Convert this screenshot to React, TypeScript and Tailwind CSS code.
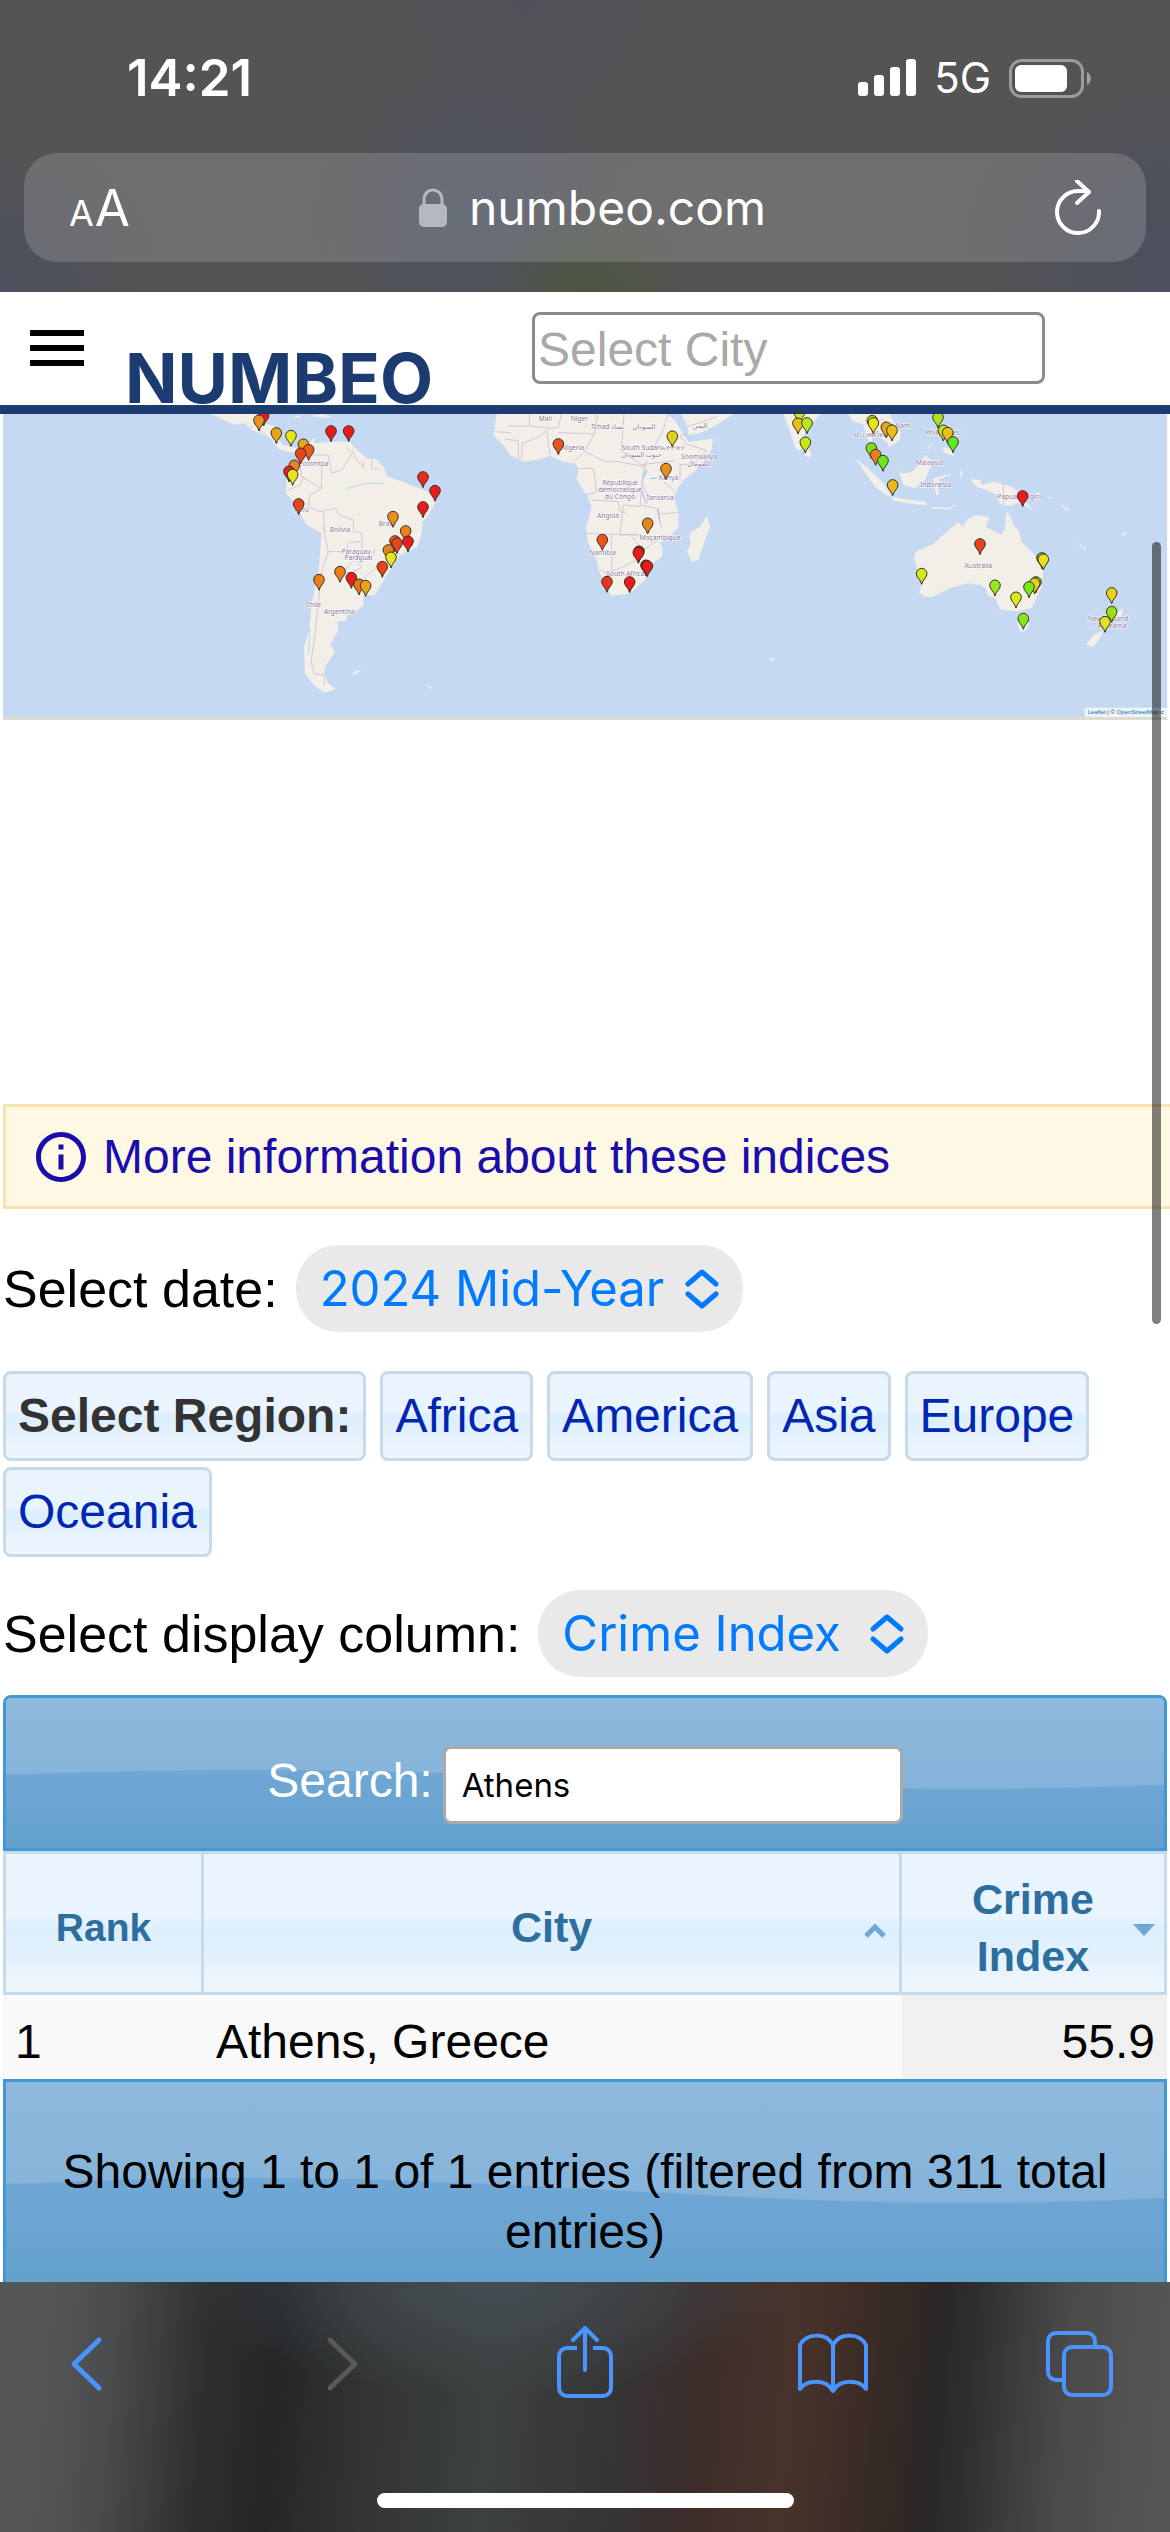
import { useState } from "react";

const regions = ["Africa", "America", "Asia", "Europe", "Oceania"];

type Pin = [x: number, y: number, color: string];

const americaPins: Pin[] = [
  [791, 78, "#e81c1c"],
  [777, 93, "#e8901c"],
  [829, 131, "#e8a51c"],
  [873, 139, "#e8e41c"],
  [993, 125, "#e81c1c"],
  [1046, 125, "#e81c1c"],
  [910, 165, "#e8a51c"],
  [926, 181, "#e8601c"],
  [902, 192, "#e8431c"],
  [883, 228, "#e8801c"],
  [867, 246, "#e81c1c"],
  [878, 256, "#e8e41c"],
  [896, 344, "#e8431c"],
  [1179, 382, "#e8901c"],
  [1185, 455, "#e8601c"],
  [1191, 461, "#e8431c"],
  [1165, 482, "#e8801c"],
  [1173, 504, "#e8e41c"],
  [1147, 532, "#e8431c"],
  [957, 571, "#e8801c"],
  [1020, 547, "#e8801c"],
  [1054, 565, "#e81c1c"],
  [1077, 585, "#e8751c"],
  [1097, 589, "#e8a51c"],
];

const africaPins: Pin[] = [
  [69, 263, "#e82a1c"],
  [105, 304, "#e81c1c"],
  [69, 353, "#e81c1c"],
  [17, 425, "#e8801c"],
  [24, 456, "#e81c1c"],
  [475, 164, "#e8551c"],
  [817, 141, "#e0d01c"],
  [798, 238, "#e8901c"],
  [743, 402, "#e8851c"],
  [607, 451, "#e8551c"],
  [717, 486, "#b81414"],
  [715, 490, "#e81c1c"],
  [738, 528, "#b81414"],
  [742, 530, "#e81c1c"],
  [621, 577, "#e8351c"],
  [689, 578, "#e81c1c"],
  [1198, 70, "#c8e81c"],
  [1194, 102, "#e8c01c"],
];

const oceaniaPins: Pin[] = [
  [21, 101, "#b8e81c"],
  [16, 159, "#c8e81c"],
  [217, 94, "#a0e01c"],
  [220, 101, "#e8e41c"],
  [259, 114, "#e8a51c"],
  [276, 123, "#e8c01c"],
  [214, 176, "#7ae01c"],
  [227, 196, "#e8801c"],
  [249, 214, "#6ae81c"],
  [278, 287, "#e8b81c"],
  [414, 84, "#a8e81c"],
  [430, 123, "#b8e81c"],
  [443, 130, "#e8c01c"],
  [459, 158, "#60e81c"],
  [668, 320, "#e81c1c"],
  [540, 464, "#e8431c"],
  [365, 553, "#d0e81c"],
  [726, 506, "#80c01c"],
  [730, 510, "#e8e01c"],
  [585, 588, "#98e81c"],
  [708, 578, "#8ad01c"],
  [704, 582, "#e8d01c"],
  [687, 593, "#78e81c"],
  [648, 624, "#d8e81c"],
  [670, 688, "#88e81c"],
  [935, 611, "#e8d01c"],
  [935, 667, "#98e01c"],
  [915, 697, "#e0e41c"],
];

function Pins({ pins }: { pins: Pin[] }) {
  return (
    <>
      {pins.map(([x, y, color]) => (
        <path
          key={`${x}-${y}`}
          transform={`translate(${x} ${y})`}
          d="M0 0C-3-15-16-20-16-32a16 16 0 1 1 32 0C16-20 3-15 0 0Z"
          fill={color}
          stroke="#3a3020"
          strokeWidth="3"
        />
      ))}
    </>
  );
}

function WorldMap() {
  return (
    <svg viewBox="9 42 3492 909" className="block h-auto w-full bg-[#c5d9f3]">
      <g fill="#f2efe9" strokeLinejoin="round">
        <path d="M862 155 838 147 822 130 815 118 795 105 750 88 735 70 705 74 665 58 635 42H775L790 70 825 78 835 118 850 135 880 142 900 145 925 130 950 108 940 130 960 128 1000 125 1050 125 1065 145 1100 175 1130 178 1157 210 1158 228 1200 242 1240 258 1290 278 1310 290 1308 305 1285 345 1268 365 1265 400 1252 440 1220 455 1198 468 1170 510 1140 560 1125 585 1090 588 1092 615 1060 640 1040 645 1040 662 1012 665 1015 690 990 735 1005 755 975 800 972 820 985 850 1008 868 975 878 940 855 915 820 912 740 928 690 935 610 955 520 965 400 920 375 885 310 858 280 858 255 865 200 895 190 900 160Z" />
        <path d="M1055 823l14-12 14 2-22 12ZM885 52h18v-5h-18ZM930 48l40-6 25 8-15 4Z" />
        <g transform="translate(1200)">
          <path d="M290 42 283 90 279 105 315 140 330 165 370 185 420 178 450 168 490 185 525 190 535 205 530 240 560 285 575 320 558 385 565 430 590 480 595 505 615 560 635 588 690 580 735 540 745 500 785 470 788 445 780 430 835 385 835 340 822 290 830 270 850 240 900 200 935 150 938 115 895 122 865 125 845 95 825 60 800 42Z" />
          <path d="M845 42 862 80 865 105 900 100 950 75 1000 42Z" />
          <path d="M920 348 930 380 915 420 895 480 875 485 862 455 872 430 868 400 900 380Z" />
          <path d="M1150 42 1165 80 1185 140 1195 152 1205 145 1215 95 1262 42Z" />
          <path d="M1218 145l10 5 7 15-8 8-12-6ZM1112 772l12 4-2 8-10-2ZM80 853l16 10-3 3-12-9Z" />
        </g>
        <g transform="translate(2400)">
          <path d="M145 42 160 65 190 72 200 110 215 140 235 190 250 205 245 170 222 135 215 105 240 110 262 130 268 142 300 120 302 95 280 65 270 42Z" />
          <path d="M165 175 200 200 250 250 275 290 258 285 225 260 190 210Z" />
          <path d="M275 290 320 298 375 305 382 316 320 310 275 300Z" />
          <path d="M298 215 330 218 378 165 398 185 375 240 345 265 310 255Z" />
          <path d="M400 235l52-14-3 6-37 12 25 15-25-5 5 35-8 1-6-25ZM395 320l50 4 28-12-22 16-54-2ZM480 210l8 12-6 14ZM380 145l22-20-18 24ZM430 140l22 6 10 22-14-4-18-8Z" />
          <path d="M510 238 540 240 545 255 580 245 640 262 672 300 700 330 655 308 630 318 600 312 590 285 560 270 530 260Z" />
          <path d="M690 290l30-14-8 18ZM745 288l14 8-8 2ZM775 310l34 20-10 2Z" />
          <path d="M348 455 400 432 430 405 440 395 475 367 490 380 500 360 525 345 568 352 558 380 605 405 615 385 617 350 622 336 632 350 640 375 655 390 665 425 705 465 730 510 725 560 695 625 650 635 600 628 585 595 565 588 558 565 540 555 500 550 450 565 400 590 378 592 358 580 365 550 350 500 343 475Z" />
          <path d="M650 667 688 668 680 690 662 697Z" />
          <path d="M928 620 945 640 970 625 965 645 940 662 925 682ZM912 690 900 715 880 740 858 735 880 705ZM835 430l6 2 20 19-5 1ZM962 405l20-12-6 14Z" />
        </g>
      </g>

      <g fill="none" stroke="#d8c4d6" strokeWidth="3">
        <path d="M760 75 750 88M775 88l22 14M925 165l60 0 10 55 30-10 30-48-15-20M1055 150l15 30 20 20M1090 180v25M1115 178v28l25 0M925 165l-25 25 5 40 60 35 0-65 20-10M965 265l-35 20-5 35 35 15 48-10 10 20 42 15 0 35 25 3 2 75-20 10 18 18-30 20-22-8 25-30M970 335l5 75 10 45 55 0 5-28 35-2M985 455l-20 60-10 90-10 100-12 80 10 35 30 6v30M865 270l35-15 10-25M1130 500l-42 38 12 30" />
        <g transform="translate(1200)">
          <path d="M388 42v36h-65M388 78l60 5M485 42l-10 40-28 4-30 25-50 18-2 52M440 95l10 70M475 98l108 4 10-60M583 102l-28 50-30 32M672 42l-8 110 60 42 100-12M805 42l-20 60-30 50M860 100l-20 8 20 24 60 20-40 40-40 2v50M790 245l35 28M535 205h45l10 70-35 12M555 155l60 30 40 0 80 15-10 60-5 60-50-5-10 90 60 0M575 300l80 5 5 30 20 2M558 400l85 3 70 0M635 405v110l35-15 60-30M690 405l40 45 45-30M720 315l50 10 15 60M780 342l55-5M600 510l35 20" />
          <path d="M862 80l90-30M283 95l50 3M315 118l40 4v60M740 180l-15 65 20 50" />
        </g>
        <g transform="translate(2400)">
          <path d="M610 255v58M305 218l30-4 28-30M195 60l20 30 30-35 30 30M215 105l12 40" />
        </g>
      </g>

      <g fill="none" stroke="#9fcbe6" strokeWidth="4">
        <path d="M965 380l8 10M930 680l-4 80M1040 265l60-15 50 0" strokeWidth="2" />
        <path d="M1926 270l6 25 10 15M1975 325l4 40M1942 210l-14 24M1950 235h20" />
      </g>

      <g
        fill="#8b7396"
        stroke="#ffffff"
        strokeWidth="3"
        paintOrder="stroke"
        textAnchor="middle"
        className="font-['Noto_Sans','DejaVu_Sans',sans-serif] text-[20px]"
      >
        <text x="940" y="197">Colombia</text>
        <text x="905" y="336">Perú</text>
        <text x="1020" y="397">Bolivia</text>
        <text x="1162" y="377">Brasil</text>
        <text x="1075" y="462">Paraguay /</text>
        <text x="1075" y="481">Paraguái</text>
        <text x="940" y="621">Chile</text>
        <text x="1018" y="642">Argentina</text>
        <text x="1636" y="64">Mali</text>
        <text x="1738" y="64">Niger</text>
        <text x="1822" y="86">Tchad تشاد</text>
        <text x="1932" y="87">السودان</text>
        <text x="2100" y="84">اليمن</text>
        <text x="1718" y="150">Nigeria</text>
        <text x="1924" y="151">South Sudan</text>
        <text x="1924" y="172">جنوب السودان</text>
        <text x="2020" y="150">ኢትዮጵያ</text>
        <text x="2097" y="177">Soomaaliya</text>
        <text x="2097" y="197">الصومال</text>
        <text x="2006" y="239">Kenya</text>
        <text x="1860" y="256">République</text>
        <text x="1860" y="277">démocratique</text>
        <text x="1860" y="297">du Congo</text>
        <text x="1979" y="299">Tanzania</text>
        <text x="1824" y="353">Angola</text>
        <text x="1980" y="421">Moçambique</text>
        <text x="1808" y="466">Namibia</text>
        <text x="1876" y="527">South Africa</text>
        <text x="2610" y="111">ประเทศไทย</text>
        <text x="2688" y="83">Việt Nam</text>
        <text x="2828" y="106">Philippines</text>
        <text x="2788" y="196">Malaysia</text>
        <text x="2807" y="262">Indonesia</text>
        <text x="3058" y="297">Papua Niugini</text>
        <text x="2935" y="505">Australia</text>
        <text x="3324" y="662">New Zealand</text>
        <text x="3330" y="683">/ Aotearoa</text>
      </g>

      <Pins pins={americaPins} />
      <g transform="translate(1200)">
        <Pins pins={africaPins} />
      </g>
      <g transform="translate(2400)">
        <Pins pins={oceaniaPins} />
      </g>

      <rect x="3254" y="923" width="250" height="28" fill="#ffffff" fillOpacity="0.7" />
      <text
        x="3263"
        y="943"
        fill="#333333"
        className="font-['Liberation_Sans',Arial,sans-serif] text-[18px]"
      >
        <a href="#leaflet" fill="#0078a8">Leaflet</a> | ©{" "}
        <a href="#osm" fill="#0078a8">OpenStreetMap</a> c
      </text>
    </svg>
  );
}

// Glossy jQuery-UI style wave behind the blue bars
function Wave() {
  return (
    <svg
      viewBox="0 0 1164 100"
      preserveAspectRatio="none"
      className="absolute inset-0 -z-10 h-full w-full"
      aria-hidden="true"
    >
      <defs>
        <linearGradient id="gloss" x1="0" y1="0" x2="0" y2="1">
          <stop offset="0" stopColor="#8fb9db" />
          <stop offset="1" stopColor="#84b3da" />
        </linearGradient>
        <linearGradient id="base" x1="0" y1="0" x2="0" y2="1">
          <stop offset="0" stopColor="#73a9d5" />
          <stop offset="0.5" stopColor="#70a7d4" />
          <stop offset="1" stopColor="#64a1cd" />
        </linearGradient>
      </defs>
      <rect width="1164" height="100" fill="url(#base)" />
      <path
        d="M0 0H1164V58C1040 61 900 62 720 57C560 53 420 48 240 48C140 48 60 50 0 51Z"
        fill="url(#gloss)"
      />
    </svg>
  );
}

type PillSelectProps = {
  id: string;
  label: string;
  options: string[];
  width: string;
};

function PillSelect({ id, label, options, width }: PillSelectProps) {
  return (
    <div className="flex items-center gap-[18px] text-[52px] leading-[60px]">
      <label htmlFor={id}>{label}</label>
      <div className="relative flex">
        <select
          id={id}
          className={`h-[87px] appearance-none rounded-[42px] bg-[#e9e9ea] pl-6 font-[Inter,sans-serif] text-[49px] text-[#007aff] ${width}`}
        >
          {options.map((option) => (
            <option key={option}>{option}</option>
          ))}
        </select>
        <svg
          viewBox="0 0 36 42"
          className="pointer-events-none absolute top-[23px] right-[23px] h-[42px] w-9"
          fill="none"
          stroke="#007aff"
          strokeWidth="5"
          strokeLinecap="round"
          strokeLinejoin="round"
        >
          <path d="M4 16 18 4 32 16M4 26 18 38 32 26" />
        </svg>
      </div>
    </div>
  );
}

function BrowserHeader() {
  return (
    <header className="bg-[radial-gradient(circle_at_50%_105%,#4b553d_0,transparent_16%),radial-gradient(circle_at_100%_90%,#4b4f5e_0,transparent_18%),radial-gradient(circle_at_0%_100%,#4b4f5c_0,transparent_14%),radial-gradient(circle_at_40%_75%,#4b5160_0,transparent_22%),radial-gradient(circle_at_45%_0%,#534f58_0,transparent_30%)] bg-[#535453] px-6 pb-[30px] text-white">
      <div className="flex h-[153px] items-center justify-between pt-[3px] pr-[55px] pl-[103px]">
        <p className="font-[Inter,sans-serif] text-[51px] leading-[60px] font-semibold">14:21</p>
        <div className="flex items-center gap-[18px]">
          <svg viewBox="0 0 58 38" className="h-[38px] w-[58px]" fill="#fff">
            <rect x="0" y="23" width="10" height="14" rx="3" />
            <rect x="16" y="16" width="10" height="21" rx="3" />
            <rect x="32" y="8" width="10" height="29" rx="3" />
            <rect x="48" y="0" width="10" height="37" rx="3" />
          </svg>
          <span className="font-[Inter,sans-serif] text-[42px] leading-[60px]">5G</span>
          <svg viewBox="0 0 82 39" className="h-[39px] w-[82px]">
            <rect x="1.5" y="1.5" width="72" height="36" rx="11" fill="none" stroke="#fff" strokeOpacity="0.42" strokeWidth="3" />
            <rect x="6" y="6" width="52" height="27" rx="6" fill="#fff" />
            <path d="M78 13c5 2 5 11 0 13Z" fill="#fff" fillOpacity="0.45" />
          </svg>
        </div>
      </div>

      <div className="flex h-[109px] items-center justify-between rounded-[33px] bg-white/16 px-[45px]">
        <button aria-label="Page settings" className="flex items-baseline gap-px pt-[5px] font-[Inter,sans-serif] leading-[60px]">
          <span className="text-[36px]">A</span>
          <span className="text-[51px]">A</span>
        </button>
        <div className="flex items-center gap-[22px]">
          <svg viewBox="0 0 28 40" className="h-10 w-7">
            <rect x="0" y="16" width="28" height="23" rx="5" fill="#b5b8c3" />
            <path d="M5 17V11a9 9 0 0 1 18 0v6" fill="none" stroke="#b5b8c3" strokeWidth="3" />
          </svg>
          <span className="font-[Inter,sans-serif] text-[48px] leading-[60px]">numbeo.com</span>
        </div>
        <button aria-label="Reload">
          <svg
            viewBox="0 0 46 56"
            className="h-14 w-[46px]"
            fill="none"
            stroke="#fff"
            strokeWidth="4"
            strokeLinecap="round"
            strokeLinejoin="round"
          >
            <path d="M44 31a21 21 0 1 1-21-20h10M22 1l12 11-12 11" />
          </svg>
        </button>
      </div>
    </header>
  );
}

function BrowserToolbar() {
  return (
    <footer className="flex flex-col items-center bg-[radial-gradient(ellipse_at_42%_0%,#454d52_0,transparent_32%),linear-gradient(95deg,#555657_4%,#4a4b4c_10%,#2d2e30_18%,#242628_24%,#333535_32%,#3c4040_42%,#363536_52%,#3b2d2b_59%,#48332a_67%,#3c2c26_73%,#2a2726_79%,#2f2e2e_82%,#4a4a4a_90%,#555555_98%)] pt-9 pb-6">
      <nav className="flex w-full justify-between px-10 text-[#4a94ff]">
        <button aria-label="Back">
          <svg viewBox="0 0 88 88" className="size-[88px]" fill="none" stroke="currentColor" strokeWidth="5" strokeLinecap="round" strokeLinejoin="round">
            <path d="M59 22 34 46 59 70" />
          </svg>
        </button>
        <button aria-label="Forward" disabled className="text-[#58595a]">
          <svg viewBox="0 0 88 88" className="size-[88px]" fill="none" stroke="currentColor" strokeWidth="5" strokeLinecap="round" strokeLinejoin="round">
            <path d="M39 22 64 46 39 70" />
          </svg>
        </button>
        <button aria-label="Share">
          <svg viewBox="0 0 88 88" className="size-[88px]" fill="none" stroke="currentColor" strokeWidth="4" strokeLinejoin="round">
            <path d="M36 30H26a8 8 0 0 0-8 8V70a8 8 0 0 0 8 8H62a8 8 0 0 0 8-8V38a8 8 0 0 0-8-8H52" />
            <path d="M44 52V10M32 22 44 10 56 22" strokeLinecap="round" />
          </svg>
        </button>
        <button aria-label="Bookmarks">
          <svg viewBox="0 0 88 88" className="size-[88px]" fill="none" stroke="currentColor" strokeWidth="4" strokeLinejoin="round">
            <path d="M8 27C14 15 34 14 41 27C48 14 68 15 74 27V71C68 62 48 60 41 73C34 60 14 62 8 71ZM41 27V73" />
          </svg>
        </button>
        <button aria-label="Tabs">
          <svg viewBox="0 0 88 88" className="size-[88px]" fill="none" stroke="currentColor" strokeWidth="4">
            <rect x="22" y="29" width="47" height="48" rx="8" />
            <path d="M53 29V23a8 8 0 0 0-8-8H14a8 8 0 0 0-8 8V54a8 8 0 0 0 8 8h8" />
          </svg>
        </button>
      </nav>
      <div className="mt-[87px] h-[15px] w-[417px] rounded-full bg-white" />
    </footer>
  );
}

export default function App() {
  const [city, setCity] = useState("");
  const [search, setSearch] = useState("Athens");

  return (
    <div className="flex min-h-screen flex-col overflow-hidden bg-white font-['Liberation_Sans',Arial,sans-serif] text-black">
      <BrowserHeader />

      <main className="relative flex-1">
        <div className="flex border-b-[9px] border-[#1c3b70] pr-[125px] pl-[21px]">
          <button aria-label="Menu" className="mt-5 h-[72px]">
            <svg viewBox="0 0 72 72" className="size-[72px]">
              <path d="M9 18h54v6H9ZM9 33h54v6H9ZM9 48h54v6H9Z" />
            </svg>
          </button>
          <a
            href="#home"
            className="w-[439px] self-end pl-8 font-[Inter,sans-serif] text-[69px] leading-[54px] font-bold text-[#1c3b70]"
          >
            NUMBEO
          </a>
          <input
            type="text"
            aria-label="Select City"
            placeholder="Select City"
            value={city}
            onChange={(e) => setCity(e.target.value)}
            className="mt-5 mb-[21px] h-[72px] min-w-0 flex-1 rounded-lg border-3 border-[#8b8b8b] px-[3px] pt-1 text-[48px] placeholder:text-[#a9a9a9]"
          />
        </div>

        <div className="mx-[3px] border-b-3 border-[#deddcd]">
          <WorldMap />
        </div>

        <div className="mt-96 ml-[3px] flex h-[105px] items-center border-3 border-r-0 border-[#f6e5b0] bg-[#fff8e5] pl-[25px]">
          <a href="#indices" className="flex items-center gap-3 text-[48px] text-[#1a0dab]">
            <svg viewBox="0 0 24 24" className="size-[60px]" fill="currentColor">
              <path d="M11 7h2v2h-2zm0 4h2v6h-2zm1-9C6.480 2 2 6.480 2 12s4.480 10 10 10 10-4.480 10-10S17.520 2 12 2zm0 18c-4.410 0-8-3.590-8-8s3.590-8 8-8 8 3.590 8 8-3.590 8-8 8z" />
            </svg>
            More information about these indices
          </a>
        </div>

        <div className="mt-9 px-[3px]">
          <PillSelect
            id="date"
            label="Select date:"
            options={["2024 Mid-Year", "2024", "2023 Mid-Year"]}
            width="w-[447px]"
          />

          <nav className="mt-[39px] flex flex-wrap gap-x-[14px] gap-y-[6px] text-[48px] leading-[84px] text-[#0026b3]">
            <span className="rounded-lg border-3 border-[#c5dbec] bg-linear-to-b from-[#e9f4fe] from-45% via-[#dceefc] via-50% to-[#eef6fe] px-3 font-bold text-[#333333]">
              Select Region:
            </span>
            {regions.map((region) => (
              <a
                key={region}
                href={`#${region}`}
                className="rounded-lg border-3 border-[#c5dbec] bg-linear-to-b from-[#e9f4fe] from-45% via-[#dceefc] via-50% to-[#eef6fe] px-3"
              >
                {region}
              </a>
            ))}
          </nav>

          <div className="mt-[33px]">
            <PillSelect
              id="column"
              label="Select display column:"
              options={["Crime Index", "Safety Index"]}
              width="w-[390px]"
            />
          </div>

          <div className="relative isolate mt-[18px] flex items-baseline justify-center gap-[10px] overflow-hidden rounded-t-lg border-3 border-[#4297d7] pt-12 pb-6 text-[48px]">
            <Wave />
            <label htmlFor="search" className="leading-[60px] text-white">
              Search:
            </label>
            <input
              id="search"
              type="search"
              value={search}
              onChange={(e) => setSearch(e.target.value)}
              className="h-[78px] w-[460px] rounded-lg border-3 border-[#aaaaaa] bg-white px-4 font-[Inter,sans-serif] text-[33px]"
            />
          </div>

          <table className="w-full table-fixed border-separate border-spacing-0">
            <colgroup>
              <col className="w-[201px]" />
              <col />
              <col className="w-[265px]" />
            </colgroup>
            <thead>
              <tr className="bg-linear-to-b from-[#e9f4fe] from-45% via-[#dceefc] via-55% to-[#f0f7fe] text-[43px] leading-[57px] text-[#2e6e9e]">
                <th className="h-36 border-3 border-[#c5dbec] p-0 pt-[9px] text-[39px]">Rank</th>
                <th className="relative h-36 border-y-3 border-r-3 border-[#c5dbec] p-0 pt-[9px]">
                  City
                  <svg viewBox="0 0 24 16" className="absolute top-[68px] right-3 h-4 w-6" fill="none" stroke="#6da8d5" strokeWidth="5">
                    <path d="M3 14 12 5 21 14" />
                  </svg>
                </th>
                <th className="relative h-36 border-y-3 border-r-3 border-[#c5dbec] px-12 py-0 pt-[9px]">
                  Crime Index
                  <svg viewBox="0 0 24 16" className="absolute top-[68px] right-2 h-4 w-6" fill="#6da8d5">
                    <path d="M1 2H23L12 14Z" />
                  </svg>
                </th>
              </tr>
            </thead>
            <tbody>
              <tr className="bg-[#f9f9f9] text-[48px] leading-[60px]">
                <td className="h-[84px] px-3 py-0 pt-[9px]">1</td>
                <td className="h-[84px] px-3 py-0 pt-[9px]">Athens, Greece</td>
                <td className="h-[84px] bg-[#f0f0f0] px-3 py-0 pt-[9px] text-right">55.9</td>
              </tr>
            </tbody>
          </table>

          <div className="relative isolate border-3 border-b-0 border-[#4297d7] px-12 pt-[60px] pb-5 text-center text-[48px] leading-[60px]">
            <Wave />
            Showing 1 to 1 of 1 entries (filtered from 311 total entries)
          </div>
        </div>

        <div className="absolute top-[250px] right-[9px] h-[782px] w-[9px] rounded-full bg-black/50" />
      </main>

      <BrowserToolbar />
    </div>
  );
}
